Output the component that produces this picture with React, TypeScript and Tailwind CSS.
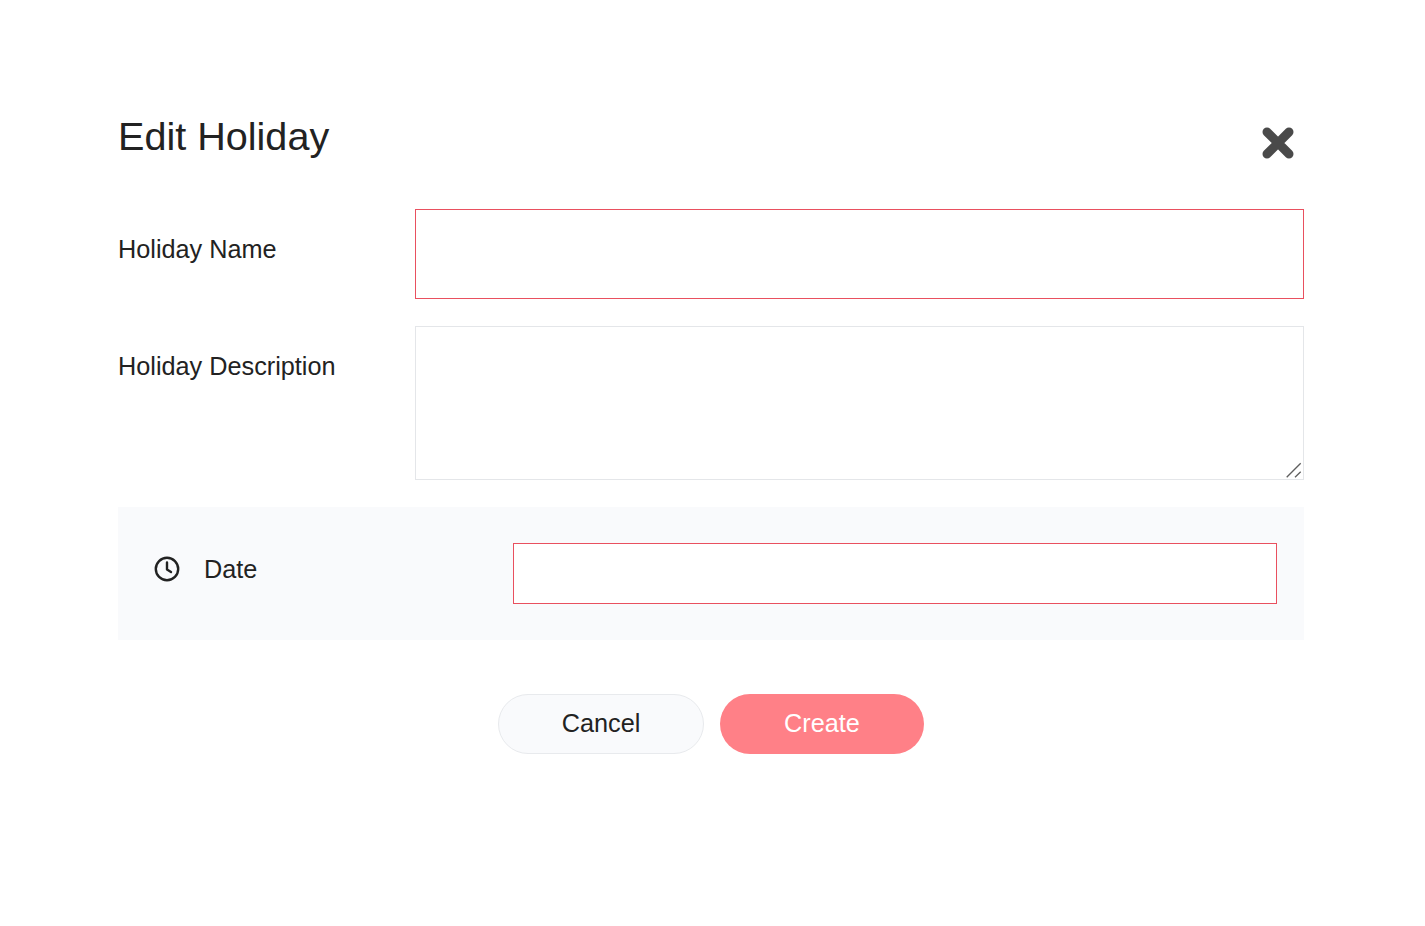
export default function App() {
  return (
    <div className="min-h-[926px] bg-white font-['Liberation_Sans',Arial,sans-serif] text-[#222222]">
      <div className="ml-[118px] w-[1186px] pt-[107px]">
        <div className="flex h-[102px] items-start justify-between">
          <h1 className="text-[39.6px] leading-[59px] font-normal">Edit Holiday</h1>
          <button className="mt-[20px] mr-[10px]" aria-label="Close">
            <svg width="32" height="32" viewBox="0 0 32 32" className="block">
              <path d="M5 5 L27 27 M27 5 L5 27" stroke="#4a4a4a" strokeWidth="9" strokeLinecap="round" />
            </svg>
          </button>
        </div>

        <div className="flex">
          <label className="w-[297px] pt-[21px] text-[25.25px] leading-[38px]">Holiday Name</label>
          <input className="h-[90px] w-[889px] border border-[#e9505f] bg-white outline-none" />
        </div>

        <div className="mt-[27px] flex">
          <label className="w-[297px] pt-[21px] text-[25.25px] leading-[38px]">Holiday Description</label>
          <div className="relative">
            <textarea className="block h-[154px] w-[889px] resize-none border border-[#e4e6e9] bg-white outline-none" />
            <svg width="20" height="20" viewBox="0 0 20 20" className="absolute right-[2px] bottom-[1px]">
              <path d="M4.7 18.3 L18.7 4.3 M13 18.3 L18.7 12.7" stroke="#5f5f5f" strokeWidth="1.3" fill="none" />
            </svg>
          </div>
        </div>

        <div className="mt-[27px] flex h-[133px] bg-[#f9fafc] pt-[36px] pr-[27px] pl-[36px]">
          <div className="flex h-[52px] w-[359px] items-center">
            <svg width="26" height="26" viewBox="0 0 26 26" fill="none" className="shrink-0">
              <circle cx="13" cy="13" r="11.2" stroke="#222222" strokeWidth="2.4" />
              <path d="M13 6.5 V13.5 L17 16" stroke="#222222" strokeWidth="2.4" strokeLinecap="round" strokeLinejoin="round" />
            </svg>
            <span className="ml-[24px] text-[25.25px] leading-[38px]">Date</span>
          </div>
          <input className="h-[61px] w-[764px] border border-[#e9505f] bg-white outline-none" />
        </div>

        <div className="mt-[54px] flex justify-center gap-[16px]">
          <button className="h-[60px] w-[206px] rounded-[30px] border border-[#e8eaed] bg-[#f9fafc] text-[25.25px]">
            Cancel
          </button>
          <button className="h-[60px] w-[204px] rounded-[30px] bg-[#ff8087] text-[25.25px] text-white">
            Create
          </button>
        </div>
      </div>
    </div>
  );
}
